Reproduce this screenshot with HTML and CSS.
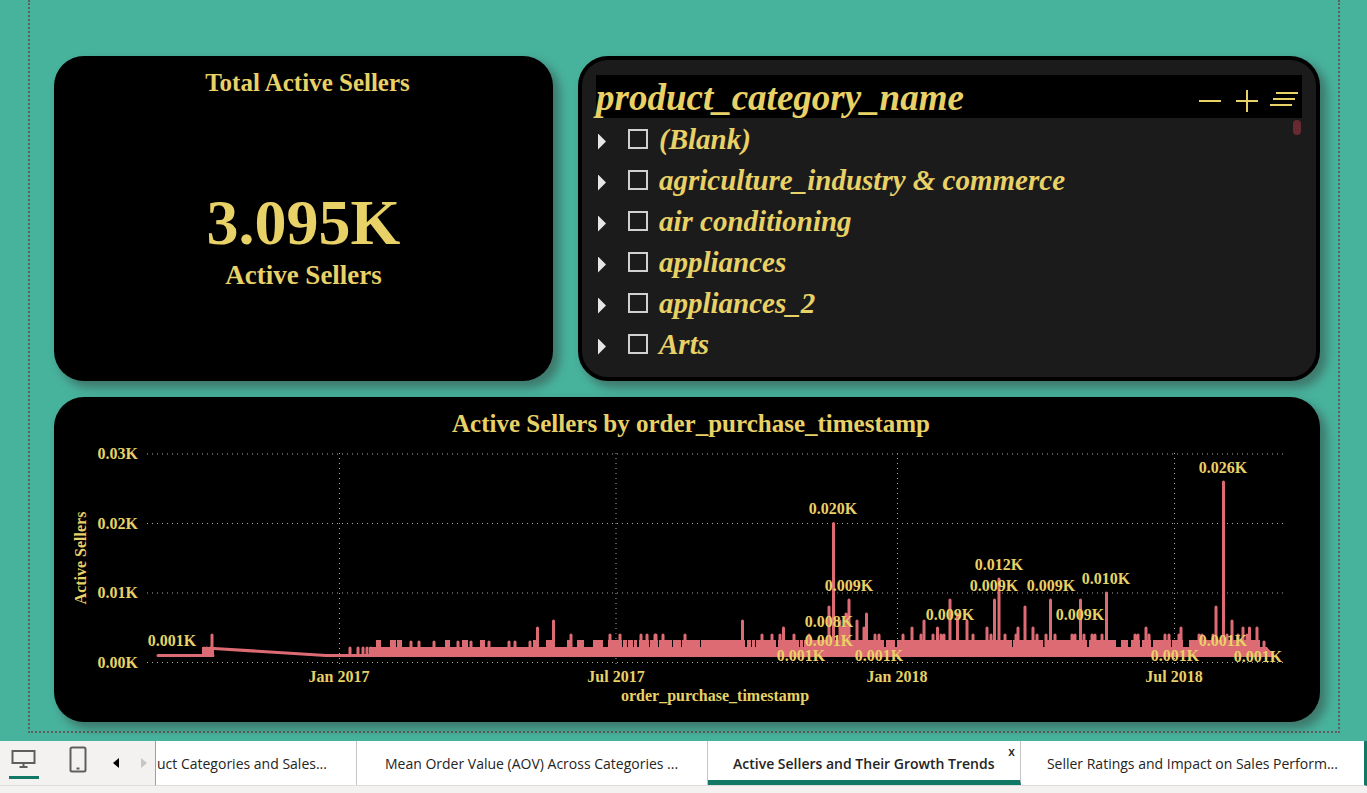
FILE: index.html
```html
<!DOCTYPE html>
<html lang="en">
<head>
<meta charset="utf-8">
<title>Active Sellers and Their Growth Trends</title>
<link rel="stylesheet" href="styles.css">
</head>
<body>
<main class="canvas">
  <div class="report">
    <section class="card kpi">
      <h2 class="card-title">Total Active Sellers</h2>
      <div class="kpi-body">
        <div class="kpi-value">3.095K</div>
        <div class="kpi-label">Active Sellers</div>
      </div>
    </section>

    <section class="card slicer">
      <header class="slicer-head">
        <h2 class="slicer-title">product_category_name</h2>
        <div class="slicer-tools">
          <button type="button" class="tool" aria-label="Collapse all"><svg width="24" height="24" viewBox="0 0 24 24"><path d="M1 12H23"/></svg></button>
          <button type="button" class="tool" aria-label="Expand all"><svg width="24" height="24" viewBox="0 0 24 24"><path d="M2 12H24M13 1V23"/></svg></button>
          <button type="button" class="tool" aria-label="Clear selections"><svg width="28" height="24" viewBox="0 0 28 24"><path d="M6 4H28M3 10H25M0 16H22"/></svg></button>
        </div>
      </header>
      <ul class="slicer-list">
        <li class="row"><button type="button" class="caret" aria-label="Expand (Blank)"></button><label class="opt"><input type="checkbox" class="box">(Blank)</label></li>
        <li class="row"><button type="button" class="caret" aria-label="Expand agriculture_industry &amp; commerce"></button><label class="opt"><input type="checkbox" class="box">agriculture_industry &amp; commerce</label></li>
        <li class="row"><button type="button" class="caret" aria-label="Expand air conditioning"></button><label class="opt"><input type="checkbox" class="box">air conditioning</label></li>
        <li class="row"><button type="button" class="caret" aria-label="Expand appliances"></button><label class="opt"><input type="checkbox" class="box">appliances</label></li>
        <li class="row"><button type="button" class="caret" aria-label="Expand appliances_2"></button><label class="opt"><input type="checkbox" class="box">appliances_2</label></li>
        <li class="row"><button type="button" class="caret" aria-label="Expand Arts"></button><label class="opt"><input type="checkbox" class="box">Arts</label></li>
      </ul>
      <span class="thumb"></span>
    </section>

    <section class="card trend">
      <h2 class="card-title">Active Sellers by order_purchase_timestamp</h2>
      <svg class="chart" viewBox="54 445 1266 277" role="img" aria-label="Active Sellers by order_purchase_timestamp">
        <g class="grid">
          <path d="M147 454H1284M147 523.5H1284M147 593H1284M147 662.5H1284"/>
          <path d="M339.5 453V664M616 453V664M897.5 453V664M1174.500 453V664"/>
        </g>
        <path class="area" d="M369 657V647H1267L1272 657ZM202 657V647H214V657Z"/>
        <path class="area" d="M376 657V640H381V657ZM390 657V640H396V657ZM397 657V640H402V657ZM445 657V640H450V657ZM462 657V640H468V657ZM480 657V640H485V657ZM533 657V640H536V657ZM546 657V640H555V657ZM567 657V640H572V657ZM577 657V640H584V657ZM593 657V640H603V657ZM608 657V640H618V657ZM617 657V640H622V657ZM623 657V640H627V657ZM628 657V640H633V657ZM634 657V640H637V657ZM639 657V640H649V657ZM650 657V640H658V657ZM659 657V640H672V657ZM673 657V640H681V657ZM682 657V640H700V657ZM701 657V640H719V657ZM719 657V640H745V657ZM747 657V640H751V657ZM752 657V640H755V657ZM756 657V640H776V657ZM778 657V640H799V657ZM800 657V640H803V657ZM804 657V640H884V657ZM886 657V640H895V657ZM897 657V640H1012V657ZM1013 657V640H1043V657ZM1045 657V640H1087V657ZM1089 657V640H1116V657ZM1121 657V640H1128V657ZM1131 657V640H1140V657ZM1142 657V640H1151V657ZM1153 657V640H1171V657ZM1172 657V640H1183V657ZM1189 657V640H1260V657Z"/>
        <g class="line">
          <path d="M158 655.5H213M214 648.500L326 655.500H1271M1259 648.500H1266L1273 655.500"/>
          <path class="spikes" d="M204 655V648M207 655V648M210 655V648M212 655V635M350 655V648M358 655V648M363 655V648M367 655V648M371 655V648M411 655V642M419 655V642M434 655V642M458 655V642M471 655V642M489 655V642M509 655V642M515 655V642M530 655V642M1264 655V642"/>
          <path class="spikes" d="M571 655V635M610 655V635M620 655V635M641 655V635M647 655V635M655 655V635M656 655V635M663 655V635M685 655V635M762 655V635M772 655V635M780 655V635M794 655V635M809 655V635M875 655V635M879 655V635M903 655V635M921 655V635M933 655V635M941 655V635M944 655V635M973 655V635M991 655V635M1005 655V635M1016 655V635M1037 655V635M1046 655V635M1055 655V635M1072 655V635M1075 655V635M1084 655V635M1092 655V635M1095 655V635M1102 655V635M1135 655V635M1138 655V635M1149 655V635M1165 655V635M1169 655V635M1179 655V635M1199 655V635M1202 655V635M1213 655V635M1227 655V635M1238 655V635M1247 655V635"/>
          <path class="spikes" d="M537.500 655V628M783.500 655V628M843 655V628M864 655V628M912 655V628M937.500 655V628M987 655V628M1018 655V628M1033 655V628M1146 655V628M1181 655V628M1243 655V628M1249.500 655V628M1257 655V628M553.500 655V621M742.500 655V621M840 655V621M857 655V621M924 655V621M967 655V621M1232 655V621M846 655V614M866.500 655V614M957.500 655V614M829 655V607M1025 655V607M1216 655V607M849 655V600M950 655V600M994.500 655V600M1050.500 655V600M1080.500 655V600M1106.500 655V593M999 655V579M833.500 655V523.500M1223.500 655V482"/>
        </g>
        <g class="tick y-tick">
          <text x="138" y="459">0.03K</text><text x="138" y="529">0.02K</text><text x="138" y="598">0.01K</text><text x="138" y="668">0.00K</text>
        </g>
        <g class="tick">
          <text x="339" y="682">Jan 2017</text><text x="616" y="682">Jul 2017</text><text x="897" y="682">Jan 2018</text><text x="1174" y="682">Jul 2018</text>
          <text x="715" y="701">order_purchase_timestamp</text>
          <text transform="translate(86 558) rotate(-90)">Active Sellers</text>
        </g>
        <g class="tick">
          <text x="172" y="646">0.001K</text><text x="801" y="661">0.001K</text><text x="829" y="646">0.001K</text><text x="829" y="627">0.008K</text>
          <text x="833" y="514">0.020K</text><text x="849" y="591">0.009K</text><text x="879" y="661">0.001K</text><text x="950" y="620">0.009K</text>
          <text x="994" y="591">0.009K</text><text x="999" y="570">0.012K</text><text x="1051" y="591">0.009K</text><text x="1080" y="620">0.009K</text>
          <text x="1106" y="584">0.010K</text><text x="1175" y="661">0.001K</text><text x="1223" y="646">0.001K</text><text x="1223" y="473">0.026K</text>
          <text x="1258" y="662">0.001K</text>
        </g>
      </svg>
    </section>
  </div>
</main>

<footer class="bar">
  <div class="views">
    <button type="button" class="view on" aria-label="Desktop layout"><svg width="26" height="22" viewBox="0 0 26 22"><path d="M1.500 2H23.500V14H1.500ZM12.500 14V18M8.500 18H16.500"/></svg></button>
    <button type="button" class="view" aria-label="Mobile layout"><svg width="18" height="28" viewBox="0 0 18 28"><rect x="1.500" y="1.500" width="15" height="24" rx="1.500"/><path d="M7.500 22.500H10.500"/></svg></button>
    <button type="button" class="step" aria-label="Previous pages"><svg width="8" height="12" viewBox="0 0 8 12"><path d="M6 1V11L0 6Z"/></svg></button>
    <button type="button" class="step" disabled aria-label="Next pages"><svg width="8" height="12" viewBox="0 0 8 12"><path d="M0 1V11L6 6Z"/></svg></button>
  </div>
  <nav class="tabs" aria-label="Pages">
    <a href="#" class="tab first">uct Categories and Sales...</a>
    <a href="#" class="tab second">Mean Order Value (AOV) Across Categories ...</a>
    <div class="tab current"><a href="#" class="tab-link" aria-current="page">Active Sellers and Their Growth Trends</a><button type="button" class="close" aria-label="Delete page">x</button></div>
    <a href="#" class="tab last">Seller Ratings and Impact on Sales Perform...</a>
  </nav>
</footer>
</body>
</html>
```
FILE: styles.css
```css
* { box-sizing: border-box; }

body {
  margin: 0;
  min-height: 100vh;
  display: flex;
  flex-direction: column;
  background: #48b39d;
  font-family: "Liberation Serif", "Times New Roman", serif;
  color: #e8d166;
}

h2, ul { margin: 0; padding: 0; }
button { padding: 0; border: 0; background: none; font: inherit; color: inherit; cursor: pointer; }

.canvas { flex: 1; display: flex; padding: 0 27px 8px 28px; }

.report {
  flex: 1;
  display: grid;
  grid-template-columns: 499fr 742fr;
  grid-template-rows: 1fr 1fr;
  gap: 16px 25px;
  padding: 56px 18px 9px 24px;
  border: 2px dotted #605e5c;
  border-top: 0;
}

.card {
  position: relative;
  display: flex;
  flex-direction: column;
  min-width: 0;
  border-radius: 30px;
  background: #000;
  box-shadow: 6px 6px 10px 1px rgba(50, 50, 50, 0.45);
}

.card-title {
  height: 48px;
  padding: 13px 0 0 8px;
  font-size: 25px;
  line-height: 28px;
  text-align: center;
}

.kpi-body {
  flex: 1;
  display: flex;
  flex-direction: column;
  align-items: center;
  justify-content: center;
  padding-bottom: 5px;
  font-weight: bold;
}
.kpi-value { font-size: 64px; line-height: 70px; }
.kpi-label { font-size: 27px; line-height: 34px; }

.slicer {
  padding: 15px 14px 13px;
  border: 4px solid #000;
  background: #1b1b1b;
  font-style: italic;
  font-weight: bold;
}
.slicer-head {
  display: flex;
  justify-content: space-between;
  height: 43px;
  background: #000;
}
.slicer-title { font-size: 37px; line-height: 46px; }
.slicer-tools { display: flex; align-items: center; gap: 12px; padding: 8px 4px 0 0; }
.tool { display: flex; }
.tool svg { fill: none; stroke: #e8d166; stroke-width: 2; }

.slicer-list { list-style: none; }
.row { display: flex; align-items: center; height: 41px; }
.caret { width: 8px; height: 16px; margin: 6px 22px 0 2px; background: #e6e6e6; clip-path: polygon(0 0, 100% 50%, 0 100%); }
.opt { display: flex; align-items: center; gap: 11px; font-size: 29px; line-height: 40px; }
.box { appearance: none; width: 20px; height: 20px; margin: 0; border: 2px solid #d0d0d0; }
.thumb {
  position: absolute;
  top: 60px;
  right: 15px;
  width: 8px;
  height: 15px;
  border-radius: 4px;
  background: #662a30;
}

.trend { grid-column: 1 / -1; }
.chart { display: block; width: 100%; flex: 1; min-height: 0; }
.grid { fill: none; stroke: #aaa; stroke-width: 1; stroke-dasharray: 1 4; }
.area { fill: #dd6b73; }
.line { fill: none; stroke: #dd6b73; stroke-width: 3; stroke-linecap: round; }
.tick { fill: #e8d166; font-size: 16px; font-weight: bold; text-anchor: middle; }
.y-tick { text-anchor: end; }

.bar {
  display: flex;
  height: 52px;
  padding-bottom: 7px;
  background: #f3f2f1;
  color: #252423;
  font-family: "Open Sans", "Noto Sans", sans-serif;
  font-size: 14px;
}
.views { display: flex; align-items: flex-start; width: 155px; border-bottom: 1px solid #dedddc; }
.view { display: flex; justify-content: center; width: 30px; height: 38px; margin-left: 9px; padding-top: 8px; }
.view svg { fill: none; stroke: #605e5c; stroke-width: 2; }
.view.on { border-bottom: 3px solid #117865; }
.view + .view { margin-left: 24px; padding-top: 5px; }
.step { display: flex; margin: 16px 0 0 20px; }
.view + .step { margin-left: 20px; }
.step svg { fill: #000; }
.step:disabled svg { fill: #c8c6c4; }

.tabs { flex: 1; display: flex; min-width: 0; border-bottom: 1px solid #dedddc; border-left: 1px solid #a19f9d; border-right: 3px solid #117865; background: #fff; }
.tab {
  position: relative;
  display: flex;
  align-items: center;
  justify-content: center;
  border-right: 1px solid #c8c6c4;
  color: inherit;
  text-decoration: none;
  white-space: nowrap;
}
.first { flex: 199; justify-content: flex-start; padding-left: 1px; }
.second { flex: 351; }
.current { flex: 313; border-bottom: 5px solid #117865; padding-top: 5px; font-weight: 600; }
.last { flex: 344; border-right: 0; }
.tab-link { color: inherit; text-decoration: none; }
.close { position: absolute; top: 2px; right: 5px; font-size: 12px; line-height: 18px; }
```
